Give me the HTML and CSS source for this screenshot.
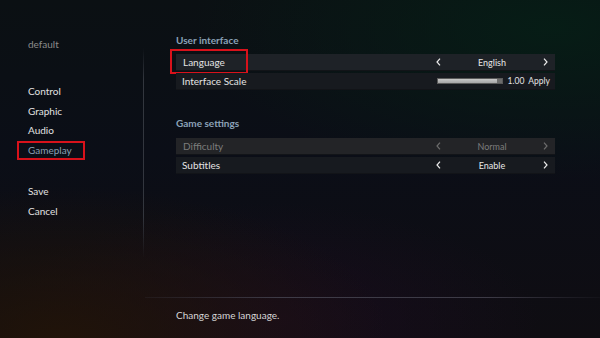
FILE: index.html
```html
<!DOCTYPE html>
<html lang="en">
<head>
    <meta charset="utf-8" />
    <meta name="viewport" content="width=device-width, initial-scale=1.0" />
    <title>Options</title>
    <link rel="stylesheet" href="styles.css">
</head>
<body>
    <div class="screen">
        <nav class="sidebar">
            <div class="profile">default</div>

            <div class="menu">
                <a class="menu-item">Control</a>
                <a class="menu-item">Graphic</a>
                <a class="menu-item">Audio</a>
                <a class="menu-item selected">Gameplay</a>
            </div>

            <div class="menu actions">
                <a class="menu-item">Save</a>
                <a class="menu-item">Cancel</a>
            </div>
        </nav>

        <div class="divider"></div>

        <main class="main">
            <section class="group">
                <h2>User interface</h2>

                <div class="row focused">
                    <span class="label">Language</span>
                    <div class="picker">
                        <svg class="chev" viewBox="0 0 5 8"><path d="M4 0.6 L1 4 L4 7.4" /></svg>
                        <span class="value">English</span>
                        <svg class="chev" viewBox="0 0 5 8"><path d="M1 0.6 L4 4 L1 7.4" /></svg>
                    </div>
                </div>

                <div class="row dark">
                    <span class="label">Interface Scale</span>
                    <div class="scale">
                        <div class="slider"><div class="slider-fill"></div></div>
                        <span class="scale-num">1.00</span>
                        <span class="apply">Apply</span>
                    </div>
                </div>
            </section>

            <section class="group">
                <h2>Game settings</h2>

                <div class="row disabled">
                    <span class="label">Difficulty</span>
                    <div class="picker">
                        <svg class="chev" viewBox="0 0 5 8"><path d="M4 0.6 L1 4 L4 7.4" /></svg>
                        <span class="value">Normal</span>
                        <svg class="chev" viewBox="0 0 5 8"><path d="M1 0.6 L4 4 L1 7.4" /></svg>
                    </div>
                </div>

                <div class="row dark">
                    <span class="label">Subtitles</span>
                    <div class="picker">
                        <svg class="chev" viewBox="0 0 5 8"><path d="M4 0.6 L1 4 L4 7.4" /></svg>
                        <span class="value">Enable</span>
                        <svg class="chev" viewBox="0 0 5 8"><path d="M1 0.6 L4 4 L1 7.4" /></svg>
                    </div>
                </div>
            </section>

            <footer class="hint">Change game language.</footer>
        </main>
    </div>
</body>
</html>
```

FILE: styles.css
```css
html, body {
    margin: 0;
    padding: 0;
    height: 100%;
}

body {
    font-family: Lato, 'Open Sans', sans-serif;
    font-size: 10px;
    color: #e4e4e4;
    overflow: hidden;
    background:
        radial-gradient(ellipse 60% 45% at 92% 8%, rgba(6, 30, 22, 0.9) 0%, rgba(6, 30, 22, 0) 100%),
        radial-gradient(ellipse 55% 45% at 10% 100%, rgba(34, 20, 8, 0.9) 0%, rgba(34, 20, 8, 0) 100%),
        radial-gradient(ellipse 45% 35% at 45% 95%, rgba(26, 12, 30, 0.8) 0%, rgba(26, 12, 30, 0) 100%),
        linear-gradient(180deg, #0b1013 0%, #0b0e17 45%, #0f0d12 100%);
}

.screen {
    display: flex;
    height: 338px;
}

/* left menu */
.sidebar {
    width: 143px;
    padding-left: 28px;
    box-sizing: border-box;
}

.profile {
    margin-top: 38px;
    line-height: 12px;
    color: #8b8b8b;
}

.menu {
    display: flex;
    flex-direction: column;
    margin-top: 32px;
}

.menu.actions {
    margin-top: 22px;
}

.menu-item {
    display: block;
    width: 57px;
    height: 19.5px;
    line-height: 19.5px;
    margin-left: -11px;
    padding-left: 11px;
    color: #e2e2e2;
}

.menu-item.selected {
    color: #8aa0b4;
    box-shadow: inset 0 0 0 2px #d8121b;
}

.divider {
    width: 1px;
    height: 210px;
    margin-top: 48px;
    background: linear-gradient(180deg, rgba(60, 64, 72, 0) 0%, rgba(60, 64, 72, 0.8) 15%, rgba(60, 64, 72, 0.8) 80%, rgba(60, 64, 72, 0) 100%);
}

/* settings */
.main {
    flex: 1;
    display: flex;
    flex-direction: column;
}

.group {
    width: 379px;
    margin-left: 32px;
}

.group h2 {
    margin: 34px 0 8px;
    font-size: 10px;
    line-height: 12px;
    font-weight: 700;
    color: #8ba2b8;
}

.group + .group h2 {
    margin-top: 25px;
    margin-bottom: 9px;
}

.row {
    position: relative;
    display: flex;
    align-items: center;
    justify-content: space-between;
    height: 16px;
    margin-bottom: 2px;
    padding-left: 7px;
    background: #1e2227;
    border-bottom: 1px solid #121418;
}

.row.dark {
    background: #171a1f;
    padding-left: 6px;
}

.row.focused::before {
    content: '';
    position: absolute;
    left: -6px;
    top: -5px;
    width: 78px;
    height: 25px;
    border: 2px solid #d8121b;
    box-sizing: border-box;
}

.label {
    line-height: 16px;
}

.picker {
    display: flex;
    align-items: center;
    justify-content: space-between;
    width: 112px;
    padding-right: 7px;
}

.chev {
    width: 5px;
    height: 8px;
    fill: none;
    stroke: #ececec;
    stroke-width: 1.2;
}

.value {
    font-size: 9px;
    color: #e8e8e8;
}

.row.disabled {
    background: #232427;
}

.row.disabled .label,
.row.disabled .value {
    color: #7c7c7c;
}

.row.disabled .chev {
    stroke: #6c6c6c;
}

.scale {
    display: flex;
    align-items: center;
    padding-right: 5px;
}

.slider {
    width: 64px;
    height: 4px;
    border: 1px solid #5a5a5a;
    background: #6c6c6c;
}

.slider-fill {
    width: 59px;
    height: 100%;
    background: linear-gradient(180deg, #c8c8c8 0%, #a6a6a6 100%);
}

.scale-num {
    margin-left: 5px;
    font-size: 8.5px;
}

.apply {
    margin-left: 4px;
    font-size: 8.5px;
}

/* bottom hint */
.hint {
    margin-top: auto;
    margin-left: 1px;
    padding: 11px 0 17px 31px;
    line-height: 12px;
    color: #d6d6d6;
    border-top: 1px solid;
    border-image: linear-gradient(90deg, rgba(60, 60, 70, 0.2), rgba(66, 64, 76, 0.9) 30%, rgba(66, 64, 76, 0.9) 75%, rgba(60, 60, 70, 0.1)) 1;
}
```
